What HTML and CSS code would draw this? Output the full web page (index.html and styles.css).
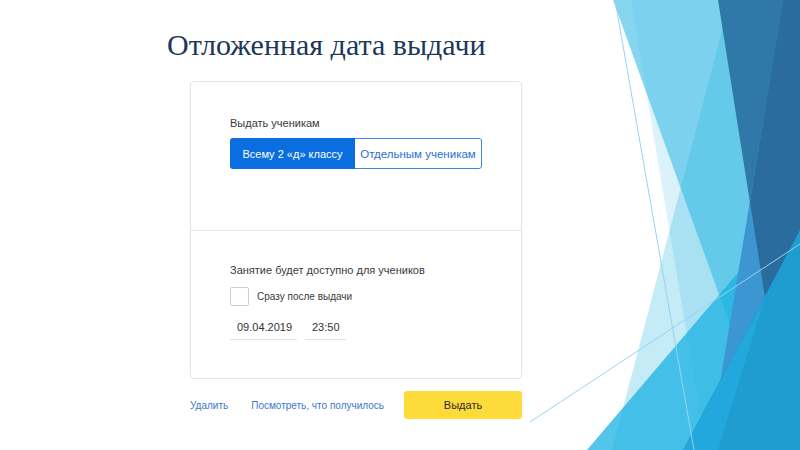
FILE: index.html
```html
<!DOCTYPE html>
<html lang="ru">
<head>
<meta charset="utf-8">
<title>Отложенная дата выдачи</title>
<link rel="stylesheet" href="styles.css">
</head>
<body>
<div class="slide">
  <svg class="deco" viewBox="0 0 800 450" width="800" height="450" aria-hidden="true">
    <polygon points="613,0 800,0 800,450 775,450" fill="#86d6f0"/>
    <polygon points="631,0 800,0 800,450 706,450" fill="rgba(91,197,234,0.22)"/>
    <polygon points="730,0 800,0 800,450 612,450" fill="rgba(44,184,223,0.28)"/>
    <polygon points="587,450 800,200 800,450" fill="rgba(25,178,227,0.75)"/>
    <polygon points="718,0 800,0 800,450 789,450" fill="#2f78a8"/>
    <polygon points="783,0 800,0 800,450 709,450" fill="#3c96d1"/>
    <polygon points="783,0 800,0 800,450 789,450 750,202" fill="#2a6c9e"/>
    <polygon points="683,450 800,230 800,450" fill="#1f9dd1"/>
    <polygon points="683,450 718,450 764,300" fill="#23a8de"/>
    <line x1="615" y1="0" x2="694" y2="450" stroke="#93d5ef" stroke-width="1"/>
    <line x1="530" y1="422" x2="800" y2="244" stroke="#93d5ef" stroke-width="1"/>
  </svg>
  <main class="content">
    <h1 class="title">Отложенная дата выдачи</h1>
    <div class="card">
      <section class="sec sec-top">
        <div class="label">Выдать ученикам</div>
        <div class="seg">
          <span class="seg-item active">Всему 2 «д» классу</span>
          <span class="seg-item">Отдельным ученикам</span>
        </div>
      </section>
      <section class="sec sec-bottom">
        <div class="label">Занятие будет доступно для учеников</div>
        <div class="check"><span class="box"></span><span class="check-text">Сразу после выдачи</span></div>
        <div class="fields">
          <span class="field date">09.04.2019</span>
          <span class="field time">23:50</span>
        </div>
      </section>
    </div>
    <div class="actions">
      <span class="link">Удалить</span>
      <span class="link">Посмотреть, что получилось</span>
      <span class="btn">Выдать</span>
    </div>
  </main>
</div>
</body>
</html>
```
FILE: styles.css
```css
html, body {
  margin: 0;
  padding: 0;
  background: #ffffff;
}

body {
  font-family: "Liberation Sans", Arial, sans-serif;
  color: #333333;
}

.slide {
  position: relative;
  width: 800px;
  height: 450px;
  overflow: hidden;
  background: #ffffff;
}

.deco {
  position: absolute;
  left: 0;
  top: 0;
  display: block;
}

.content {
  position: relative;
  padding-top: 29px;
}

.title {
  margin: 0 0 20px 167px;
  font-family: "Liberation Serif", "Times New Roman", serif;
  font-weight: normal;
  font-size: 30px;
  line-height: 32px;
  color: #1b3759;
  white-space: nowrap;
}

.card {
  margin-left: 190px;
  width: 332px;
  box-sizing: border-box;
  border: 1px solid #e4e4e4;
  border-radius: 4px;
  background: #ffffff;
}

.sec {
  box-sizing: border-box;
  padding-left: 39px;
}

.sec-top {
  height: 149px;
  padding-top: 35px;
  border-bottom: 1px solid #e6e6e6;
}

.sec-bottom {
  height: 147px;
  padding-top: 33px;
}

.label {
  font-size: 11px;
  line-height: 13px;
  color: #3a3a3a;
}

.sec-top .label {
  margin-bottom: 8px;
}

.sec-bottom .label {
  margin-bottom: 10px;
}

.seg {
  display: flex;
  width: 252px;
  height: 31px;
  border-radius: 3px;
  overflow: hidden;
}

.seg-item {
  display: flex;
  align-items: center;
  justify-content: center;
  box-sizing: border-box;
  height: 31px;
  font-size: 11.5px;
  white-space: nowrap;
}

.seg-item.active {
  width: 125px;
  background: #0a6ee0;
  color: #ffffff;
  font-size: 11px;
}

.seg-item:not(.active) {
  width: 127px;
  border: 1px solid #3d86e3;
  border-left: none;
  border-radius: 0 3px 3px 0;
  color: #2a6fd4;
  background: #ffffff;
}

.check {
  display: flex;
  align-items: center;
  gap: 8px;
  height: 19px;
  margin-bottom: 10px;
}

.box {
  width: 19px;
  height: 19px;
  box-sizing: border-box;
  border: 1px solid #cfcfcf;
  border-radius: 2px;
}

.check-text {
  font-size: 10px;
  color: #3a3a3a;
}

.fields {
  display: flex;
  gap: 8px;
}

.field {
  box-sizing: border-box;
  height: 24px;
  line-height: 23px;
  padding-left: 7px;
  border-bottom: 1px solid #e4e4e4;
  font-size: 11px;
  color: #333333;
}

.field.date {
  width: 67px;
}

.field.time {
  width: 41px;
}

.actions {
  display: flex;
  align-items: center;
  margin: 12px 0 0 190px;
  width: 332px;
  height: 28px;
}

.link {
  font-size: 10px;
  color: #3b78cc;
  white-space: nowrap;
}

.link + .link {
  margin-left: 23px;
}

.btn {
  flex: 0 0 118px;
  margin-left: auto;
  height: 28px;
  display: flex;
  align-items: center;
  justify-content: center;
  background: #fddb3a;
  border-radius: 3px;
  font-size: 11px;
  color: #2a2a2a;
}
```
